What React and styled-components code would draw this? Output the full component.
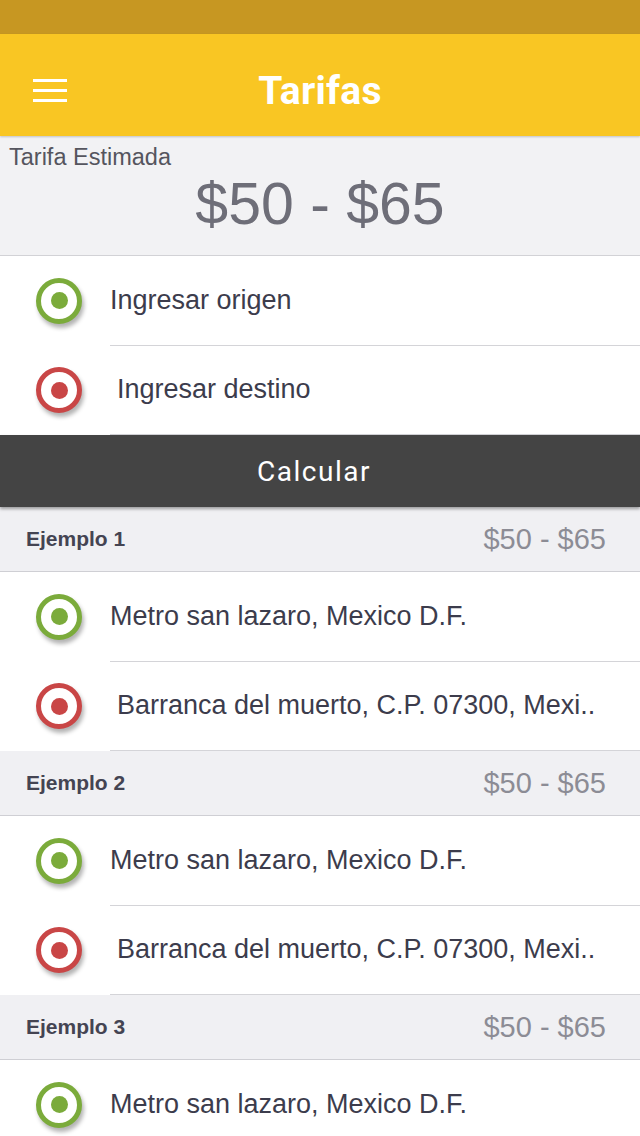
import React from 'react';
import styled, { createGlobalStyle } from 'styled-components';

const GlobalStyle = createGlobalStyle`
  html, body {
    margin: 0;
    padding: 0;
    background: #ffffff;
  }
  body {
    font-family: 'Liberation Sans', Arial, sans-serif;
    overflow: hidden;
  }
`;

const examples = [
  { id: 1, from: 'Metro san lazaro, Mexico D.F.', to: 'Barranca del muerto, C.P. 07300, Mexi..' },
  { id: 2, from: 'Metro san lazaro, Mexico D.F.', to: 'Barranca del muerto, C.P. 07300, Mexi..' },
  { id: 3, from: 'Metro san lazaro, Mexico D.F.', to: 'Barranca del muerto, C.P. 07300, Mexi..' }
];

function Pin({ color }) {
  return (
    <PinRing color={color}>
      <PinDot color={color} />
    </PinRing>
  );
}

function LocationRow({ color, label, shift }) {
  return (
    <Row>
      <IconCell>
        <Pin color={color} />
      </IconCell>
      <RowText shift={shift}>{label}</RowText>
    </Row>
  );
}

export default function App() {
  return (
    <Screen>
      <GlobalStyle />
      <StatusBar />
      <Toolbar>
        <MenuButton aria-label="menu">
          <span />
          <span />
          <span />
        </MenuButton>
        <Title>Tarifas</Title>
      </Toolbar>

      <Estimate>
        <EstimateLabel>Tarifa Estimada</EstimateLabel>
        <EstimatePrice>$50 - $65</EstimatePrice>
      </Estimate>

      <LocationRow color="#7bab3b" label="Ingresar origen" />
      <LocationRow color="#c94646" label="Ingresar destino" shift />

      <CalcButton>Calcular</CalcButton>

      {examples.map(ex => (
        <section key={ex.id}>
          <ExampleHeader>
            <ExampleName>Ejemplo {ex.id}</ExampleName>
            <ExamplePrice>$50 - $65</ExamplePrice>
          </ExampleHeader>
          <LocationRow color="#7bab3b" label={ex.from} />
          <LocationRow color="#c94646" label={ex.to} shift />
        </section>
      ))}
    </Screen>
  );
}

const Screen = styled.div`
  width: 640px;
  height: 1136px;
  overflow: hidden;
  background: #ffffff;
`;

const StatusBar = styled.div`
  height: 34px;
  background: #c79722;
`;

const Toolbar = styled.header`
  position: relative;
  height: 102px;
  box-sizing: border-box;
  padding-top: 12px;
  background: #f9c623;
  display: flex;
  align-items: center;
  justify-content: center;
  box-shadow: 0 1px 2px rgba(0, 0, 0, 0.2);
  z-index: 2;
`;

const MenuButton = styled.div`
  position: absolute;
  left: 33px;
  top: 45px;
  width: 34px;
  display: flex;
  flex-direction: column;
  gap: 7px;

  span {
    display: block;
    height: 3px;
    background: #ffffff;
  }
`;

const Title = styled.h1`
  margin: 0;
  font-family: Roboto, 'Liberation Sans', sans-serif;
  font-weight: 700;
  font-size: 39px;
  color: #ffffff;
  letter-spacing: 0.3px;
`;

const Estimate = styled.div`
  height: 119px;
  background: #f2f2f4;
  border-bottom: 1px solid #d2d2d6;
  display: flex;
  flex-direction: column;
`;

const EstimateLabel = styled.div`
  padding: 8px 0 0 9px;
  font-size: 23.5px;
  color: #55555e;
  line-height: 26px;
`;

const EstimatePrice = styled.div`
  text-align: center;
  font-size: 59px;
  line-height: 60px;
  color: #6e6e78;
  margin-top: 4px;
`;

const Row = styled.div`
  display: flex;
  height: 89.5px;
  background: #ffffff;
`;

const IconCell = styled.div`
  width: 110px;
  flex: none;
  display: flex;
  align-items: center;
  padding-left: 36px;
  box-sizing: border-box;
`;

const PinRing = styled.div`
  width: 46px;
  height: 46px;
  border-radius: 50%;
  border: 5px solid ${props => props.color};
  background: #ffffff;
  box-sizing: border-box;
  display: flex;
  align-items: center;
  justify-content: center;
  box-shadow: 2px 4px 4px rgba(0, 0, 0, 0.3);
`;

const PinDot = styled.div`
  width: 17px;
  height: 17px;
  border-radius: 50%;
  background: ${props => props.color};
`;

const RowText = styled.div`
  flex: 1;
  display: flex;
  align-items: center;
  border-bottom: 1px solid #d4d4d8;
  padding-left: ${props => (props.shift ? '7px' : '0')};
  font-size: 27px;
  color: #3c3c4c;
  white-space: nowrap;
  overflow: hidden;
`;

const CalcButton = styled.button`
  display: block;
  width: 100%;
  height: 72px;
  padding: 0 12px 0 0;
  border: none;
  background: #444444;
  color: #ffffff;
  font-family: Roboto, 'Liberation Sans', sans-serif;
  font-size: 28px;
  letter-spacing: 1.5px;
  box-shadow: 0 2px 3px rgba(0, 0, 0, 0.35);
  position: relative;
  z-index: 1;
`;

const ExampleHeader = styled.div`
  height: 64px;
  background: #f0f0f3;
  border-bottom: 1px solid #cfcfd4;
  display: flex;
  align-items: center;
  justify-content: space-between;
  padding: 0 34px 0 26px;
`;

const ExampleName = styled.div`
  font-size: 21px;
  font-weight: 700;
  color: #444452;
`;

const ExamplePrice = styled.div`
  font-size: 29px;
  color: #8c8c95;
`;
